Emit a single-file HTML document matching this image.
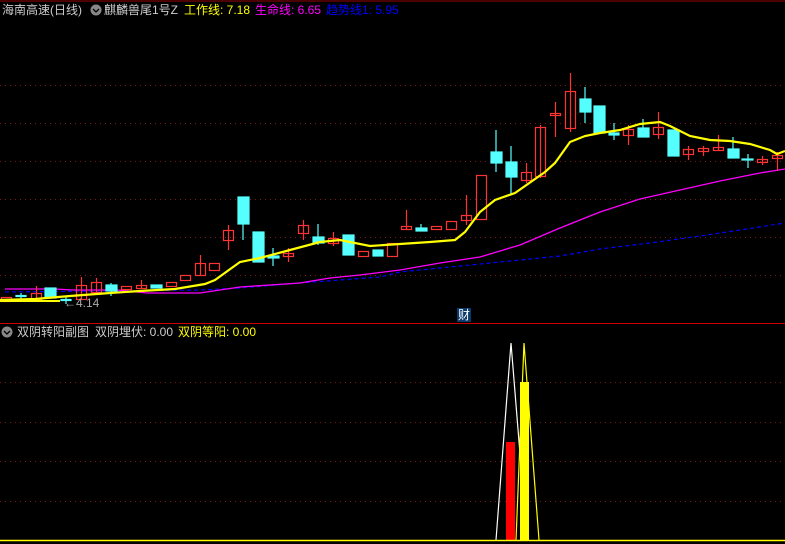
<!DOCTYPE html>
<html><head><meta charset="utf-8"><style>
body{margin:0;background:#000;width:785px;height:544px;overflow:hidden;font-family:"Liberation Sans","Noto Sans CJK SC",sans-serif}
svg{position:absolute;left:0;top:0}
.t{position:absolute;font-size:12px;white-space:nowrap;line-height:14px}
</style></head><body>
<svg width="785" height="544" xmlns="http://www.w3.org/2000/svg">
<rect width="785" height="544" fill="#000"/>
<line x1="0" y1="1" x2="785" y2="1" stroke="#900" stroke-width="1"/>
<g stroke="#7a1a1a" stroke-dasharray="1,4" stroke-width="1">
<line x1="0" y1="85.5" x2="785" y2="85.5"/><line x1="0" y1="123.5" x2="785" y2="123.5"/>
<line x1="0" y1="161.5" x2="785" y2="161.5"/><line x1="0" y1="199.5" x2="785" y2="199.5"/>
<line x1="0" y1="237.5" x2="785" y2="237.5"/><line x1="0" y1="275.5" x2="785" y2="275.5"/>
<line x1="0" y1="382.5" x2="785" y2="382.5"/><line x1="0" y1="422.5" x2="785" y2="422.5"/>
<line x1="0" y1="461.5" x2="785" y2="461.5"/><line x1="0" y1="501.5" x2="785" y2="501.5"/>
</g>
<line x1="0" y1="323.5" x2="785" y2="323.5" stroke="#c00" stroke-width="1"/>
<polyline fill="none" stroke="#0000ff" stroke-width="1.2" stroke-dasharray="4,3" points="5,292 200,290 240,288 300,283 340,280 380,277 400,272 440,268 500,262 560,256 600,249 650,243 700,236 740,230 785,223"/>
<polyline fill="none" stroke="#ff00ff" stroke-width="1.3" points="5,289 55,289 73,290 118,290 147,293 200,293 240,287 270,285 300,283 330,278 360,275 400,270 440,263 480,257 520,245 560,228 600,212 640,199 680,190 720,181 760,173 785,169"/>
<g stroke-width="1.2">
<!-- red hollow candles: x,top,bottom,wickTop,wickBot -->
<g fill="none" stroke="#ff3333">
<line x1="36.5" y1="286" x2="36.5" y2="300"/><rect x="1.5" y="297.5" width="10" height="4"/>
<rect x="31.5" y="293.5" width="10" height="6"/>
<line x1="81.5" y1="277" x2="81.5" y2="300"/><rect x="76.5" y="285.5" width="10" height="14"/>
<line x1="96.5" y1="278" x2="96.5" y2="292"/><rect x="91.5" y="282.5" width="10" height="10"/>
<rect x="121.5" y="286.5" width="10" height="3"/>
<line x1="141.5" y1="280" x2="141.5" y2="288"/><rect x="136.5" y="285.5" width="10" height="3"/>
<rect x="166.5" y="282.5" width="10" height="4"/>
<rect x="180.5" y="275.5" width="10" height="5"/>
<line x1="200.5" y1="255" x2="200.5" y2="276"/><rect x="195.5" y="263.5" width="10" height="12"/>
<rect x="209.5" y="263.5" width="10" height="7"/>
<line x1="228.5" y1="225" x2="228.5" y2="250"/><rect x="223.5" y="230.5" width="10" height="10"/>
<line x1="288.5" y1="248" x2="288.5" y2="262"/><rect x="283.5" y="253.5" width="10" height="3"/>
<line x1="303.5" y1="220" x2="303.5" y2="240"/><rect x="298.5" y="225.5" width="10" height="8"/>
<line x1="333.5" y1="232" x2="333.5" y2="246"/><rect x="328.5" y="238.5" width="10" height="5"/>
<rect x="358.5" y="251.5" width="10" height="5"/>
<rect x="387.5" y="243.5" width="10" height="13"/>
<line x1="406.5" y1="210" x2="406.5" y2="229"/><rect x="401.5" y="226.5" width="10" height="3"/>
<rect x="431.5" y="226.5" width="10" height="3"/>
<rect x="446.5" y="221.5" width="10" height="8"/>
<line x1="466.5" y1="195" x2="466.5" y2="225"/><rect x="461.5" y="215.5" width="10" height="5"/>
<rect x="476.5" y="175.5" width="10" height="44"/>
<line x1="526.5" y1="163" x2="526.5" y2="183"/><rect x="521.5" y="172.5" width="10" height="8"/>
<line x1="540.5" y1="125" x2="540.5" y2="178"/><rect x="535.5" y="127.5" width="10" height="49"/>
<line x1="555.5" y1="102" x2="555.5" y2="137"/><rect x="550.5" y="113.5" width="10" height="2"/>
<line x1="570.5" y1="73" x2="570.5" y2="132"/><rect x="565.5" y="91.5" width="10" height="37"/>
<line x1="628.5" y1="125" x2="628.5" y2="145"/><rect x="623.5" y="129.5" width="10" height="6"/>
<line x1="658.5" y1="112" x2="658.5" y2="139"/><rect x="653.5" y="127.5" width="10" height="7"/>
<line x1="688.5" y1="146" x2="688.5" y2="160"/><rect x="683.5" y="149.5" width="10" height="5"/>
<line x1="703.5" y1="146" x2="703.5" y2="156"/><rect x="698.5" y="148.5" width="10" height="3"/>
<line x1="718.5" y1="135" x2="718.5" y2="151"/><rect x="713.5" y="147.5" width="10" height="3"/>
<line x1="762.5" y1="156" x2="762.5" y2="165"/><rect x="757.5" y="159.5" width="10" height="3"/>
<line x1="777.5" y1="152" x2="777.5" y2="171"/><rect x="772.5" y="155.5" width="10" height="3"/>
</g>
<g fill="#55ffff" stroke="#55ffff">
<line x1="21" y1="293" x2="21" y2="299"/><rect x="16" y="295.5" width="10" height="1"/>
<rect x="45" y="288" width="11" height="10"/>
<line x1="66" y1="296" x2="66" y2="304"/><rect x="61" y="299.5" width="10" height="1"/>
<rect x="106" y="285" width="11" height="6"/><line x1="111" y1="283" x2="111" y2="296"/>
<rect x="151" y="285" width="11" height="3"/>
<rect x="238" y="197" width="11" height="27"/><line x1="243" y1="224" x2="243" y2="240"/>
<rect x="253" y="232" width="11" height="30"/>
<line x1="273" y1="248" x2="273" y2="266"/><rect x="268" y="256" width="11" height="2"/>
<rect x="313" y="237" width="11" height="6"/><line x1="318" y1="224" x2="318" y2="245"/>
<rect x="343" y="235" width="11" height="20"/>
<rect x="373" y="250" width="10" height="6"/>
<rect x="416" y="228" width="11" height="3"/><line x1="421" y1="224" x2="421" y2="231"/>
<rect x="491" y="152" width="11" height="11"/><line x1="496" y1="130" x2="496" y2="172"/>
<rect x="506" y="162" width="11" height="15"/><line x1="511" y1="146" x2="511" y2="195"/>
<rect x="580" y="99" width="11" height="13"/><line x1="585" y1="87" x2="585" y2="123"/>
<rect x="594" y="106" width="11" height="27"/>
<line x1="614" y1="123" x2="614" y2="140"/><rect x="609" y="133" width="10" height="2"/>
<rect x="638" y="128" width="11" height="9"/><line x1="643" y1="119" x2="643" y2="137"/>
<rect x="668" y="130" width="11" height="26"/>
<rect x="728" y="149" width="11" height="9"/><line x1="733" y1="137" x2="733" y2="158"/>
<line x1="748" y1="154" x2="748" y2="168"/><rect x="742" y="159" width="11" height="1"/>
</g>
</g>
<polyline fill="none" stroke="#ffff00" stroke-width="2.2" points="0,300 35,299 70,296 110,293 140,291 175,289 205,284 215,280 240,262 260,258 290,250 320,242 340,240 370,246 400,244 430,242 455,240 465,232 480,212 495,200 515,193 545,172 555,163 570,142 585,136 600,133 620,130 640,124 660,122 670,126 690,136 710,140 730,141 750,144 770,150 777,154 785,151"/>
<line x1="0" y1="301" x2="60" y2="301" stroke="#ffff00" stroke-width="2"/>
<!-- sub chart -->
<polyline fill="none" stroke="#fff" stroke-width="1.2" points="496,540 511,343 527,540"/>
<rect x="506" y="442" width="9" height="99" fill="#ff0000"/>
<polyline fill="none" stroke="#ffff00" stroke-width="1.2" points="516,540 524,343 539,540"/>
<rect x="520" y="382" width="9" height="159" fill="#ffff00"/>
<line x1="0" y1="540.5" x2="785" y2="540.5" stroke="#ffff00" stroke-width="1.5"/>
<!-- circle icons -->
<circle cx="96" cy="10" r="5.5" fill="#888"/><path d="M93,9 L96,12 L99,9" stroke="#000" stroke-width="1.3" fill="none"/>
<circle cx="7" cy="332" r="5.5" fill="#888"/><path d="M4,331 L7,334 L10,331" stroke="#000" stroke-width="1.3" fill="none"/>
<rect x="457" y="308" width="14" height="14" fill="#0a3a6a"/>
</svg>
<div class="t" style="left:2px;top:3px;color:#ccc">海南高速(日线)</div>
<div class="t" style="left:104px;top:3px;color:#ccc">麒麟兽尾1号Z</div>
<div class="t" style="left:184px;top:3px;color:#ffff00">工作线: 7.18</div>
<div class="t" style="left:255px;top:3px;color:#ff00ff">生命线: 6.65</div>
<div class="t" style="left:326px;top:3px;color:#0000ff">趋势线1: 5.95</div>
<div class="t" style="left:64px;top:296px;color:#aaa">←4.14</div>
<div class="t" style="left:458px;top:308px;color:#fff">财</div>
<div class="t" style="left:17px;top:325px;color:#ccc">双阴转阳副图</div>
<div class="t" style="left:95px;top:325px;color:#ccc">双阴埋伏: 0.00</div>
<div class="t" style="left:178px;top:325px;color:#ffff00">双阴等阳: 0.00</div>
</body></html>
